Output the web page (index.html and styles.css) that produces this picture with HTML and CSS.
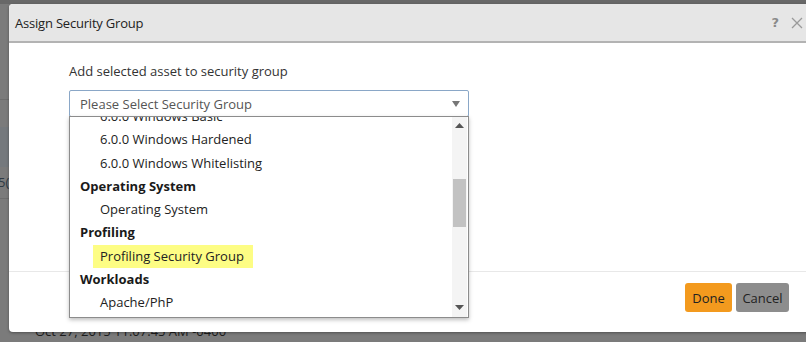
FILE: index.html
```html
<!DOCTYPE html>
<html>
<head>
<meta charset="utf-8">
<link rel="stylesheet" href="styles.css">
</head>
<body>
<div class="app">
  <div class="bg-row r1"></div>
  <div class="bg-row r2"></div>
  <div class="bg-row r3"></div>
  <div class="bg-row r4"><span class="bg-text">5(</span></div>
  <div class="bg-date">Oct 27, 2015 11:07:45 AM -0400</div>
</div>
<div class="modal">
  <div class="modal-header">
    <span class="modal-title">Assign Security Group</span>
    <span class="modal-tools">
      <span class="help">?</span>
      <svg class="close" width="12" height="12" viewBox="0 0 12 12"><path d="M1 1L11 11M11 1L1 11" stroke="#9a9a9a" stroke-width="1.3" fill="none"/></svg>
    </span>
  </div>
  <div class="modal-body">
    <div class="label">Add selected asset to security group</div>
    <div class="select-wrap">
      <div class="select">
        <span class="placeholder">Please Select Security Group</span>
        <svg class="caret" width="8" height="6" viewBox="0 0 8 6"><path d="M0 0H8L4 6Z" fill="#777"/></svg>
      </div>
      <div class="dropdown">
        <div class="options">
          <div class="opt clipped">6.0.0 Windows Basic</div>
          <div class="opt">6.0.0 Windows Hardened</div>
          <div class="opt">6.0.0 Windows Whitelisting</div>
          <div class="grp">Operating System</div>
          <div class="opt">Operating System</div>
          <div class="grp">Profiling</div>
          <div class="opt"><span class="hl">Profiling Security Group</span></div>
          <div class="grp">Workloads</div>
          <div class="opt">Apache/PhP</div>
        </div>
        <div class="scrollbar">
          <svg width="9" height="6" viewBox="0 0 9 6"><path d="M0 6H9L4.5 1Z" fill="#555"/></svg>
          <div class="track"><div class="thumb"></div></div>
          <svg width="9" height="6" viewBox="0 0 9 6"><path d="M0 0H9L4.5 5Z" fill="#555"/></svg>
        </div>
      </div>
    </div>
  </div>
  <div class="modal-footer">
    <button class="btn done">Done</button>
    <button class="btn cancel">Cancel</button>
  </div>
</div>
</body>
</html>
```
FILE: styles.css
```css
html, body {
  margin: 0;
  padding: 0;
  width: 806px;
  height: 342px;
  overflow: hidden;
  background: #7b7b7b;
  font-family: "Open Sans", "DejaVu Sans", sans-serif;
}
.app {
  position: relative;
  height: 342px;
  border-top: 4px solid #686868;
  box-sizing: border-box;
}
.bg-row {
  border-bottom: 1px solid #6e6e6e;
}
.r1 { margin-top: 63px; height: 32px; }
.r2 { height: 27px; border-bottom: none; }
.r3 { height: 40px; background: #75797d; border-bottom: none; }
.r4 { height: 31px; }
.bg-text {
  display: block;
  line-height: 30px;
  font-size: 13px;
  color: #2f3a44;
  margin-left: -2px;
}
.bg-date {
  position: absolute;
  left: 35px;
  top: 318px;
  font-size: 13px;
  color: #1e1e1e;
}
.modal {
  position: absolute;
  left: 9px;
  top: 4px;
  width: 820px;
  height: 328px;
  background: #fff;
  border-radius: 4px;
  box-shadow: 0 1px 3px rgba(0,0,0,0.35);
  display: flex;
  flex-direction: column;
}
.modal-header {
  height: 37px;
  background: #e6e6e6;
  border-bottom: 2px solid #b3b3b3;
  border-radius: 4px 4px 0 0;
  display: flex;
  align-items: center;
  padding-left: 6px;
  padding-right: 24px;
  justify-content: space-between;
}
.modal-title {
  font-size: 13px;
  color: #222;
  letter-spacing: -0.2px;
}
.modal-tools {
  display: flex;
  align-items: center;
  gap: 12px;
  margin-right: 2px;
}
.help {
  font-size: 13px;
  font-weight: 700;
  color: #8a8a8a;
  font-family: "DejaVu Sans", sans-serif;
}
.close { display: block; }
.modal-body {
  flex: 1;
  padding: 19px 0 0 60px;
  border-bottom: 1px solid #e8e8e8;
}
.label {
  font-size: 13px;
  color: #333;
  line-height: 18px;
}
.select-wrap {
  position: relative;
  margin-top: 10px;
  width: 400px;
}
.select {
  border: 1px solid #8aa7c7;
  border-radius: 2px;
  box-sizing: border-box;
  height: 27px;
  display: flex;
  align-items: center;
  justify-content: space-between;
  padding: 0 8px 0 10px;
  background: #fff;
}
.placeholder {
  font-size: 13px;
  color: #555;
}
.caret { display: block; }
.dropdown {
  position: absolute;
  left: 0;
  top: 26px;
  width: 400px;
  height: 202px;
  box-sizing: border-box;
  background: #fff;
  border: 1px solid #8c8c8c;
  box-shadow: 0 2px 4px rgba(0,0,0,0.25);
  display: flex;
  overflow: hidden;
  z-index: 2;
}
.options {
  flex: 1;
  margin-top: -12px;
  font-size: 13px;
  color: #222;
}
.opt, .grp {
  height: 23.3px;
  line-height: 23px;
  white-space: nowrap;
}
.opt { padding-left: 30px; }
.grp { padding-left: 10px; font-weight: 700; color: #1a1a1a; }
.hl {
  display: inline-block;
  background: #fdfd84;
  padding: 0 9px 0 7px;
  margin-left: -7px;
}
.scrollbar {
  width: 15px;
  margin-right: 1px;
  background: #f4f4f4;
  display: flex;
  flex-direction: column;
  align-items: center;
  padding: 5px 0 6px;
  box-sizing: border-box;
  gap: 3px;
}
.track {
  flex: 1;
  width: 100%;
  position: relative;
}
.thumb {
  position: absolute;
  left: 1px;
  right: 1px;
  top: 48px;
  height: 48px;
  background: #c2c2c2;
}
.modal-footer {
  height: 60px;
  display: flex;
  align-items: flex-start;
  justify-content: flex-end;
  padding: 11px 17px 0 0;
  box-sizing: border-box;
  gap: 4px;
  width: 797px;
}
.btn {
  font-family: "Open Sans", "DejaVu Sans", sans-serif;
  font-size: 13px;
  height: 29px;
  border: none;
  border-radius: 3px;
  color: #222;
  padding: 0;
}
.done { background: #f39a1e; width: 47px; }
.cancel { background: #8d8d8d; width: 53px; }
```
